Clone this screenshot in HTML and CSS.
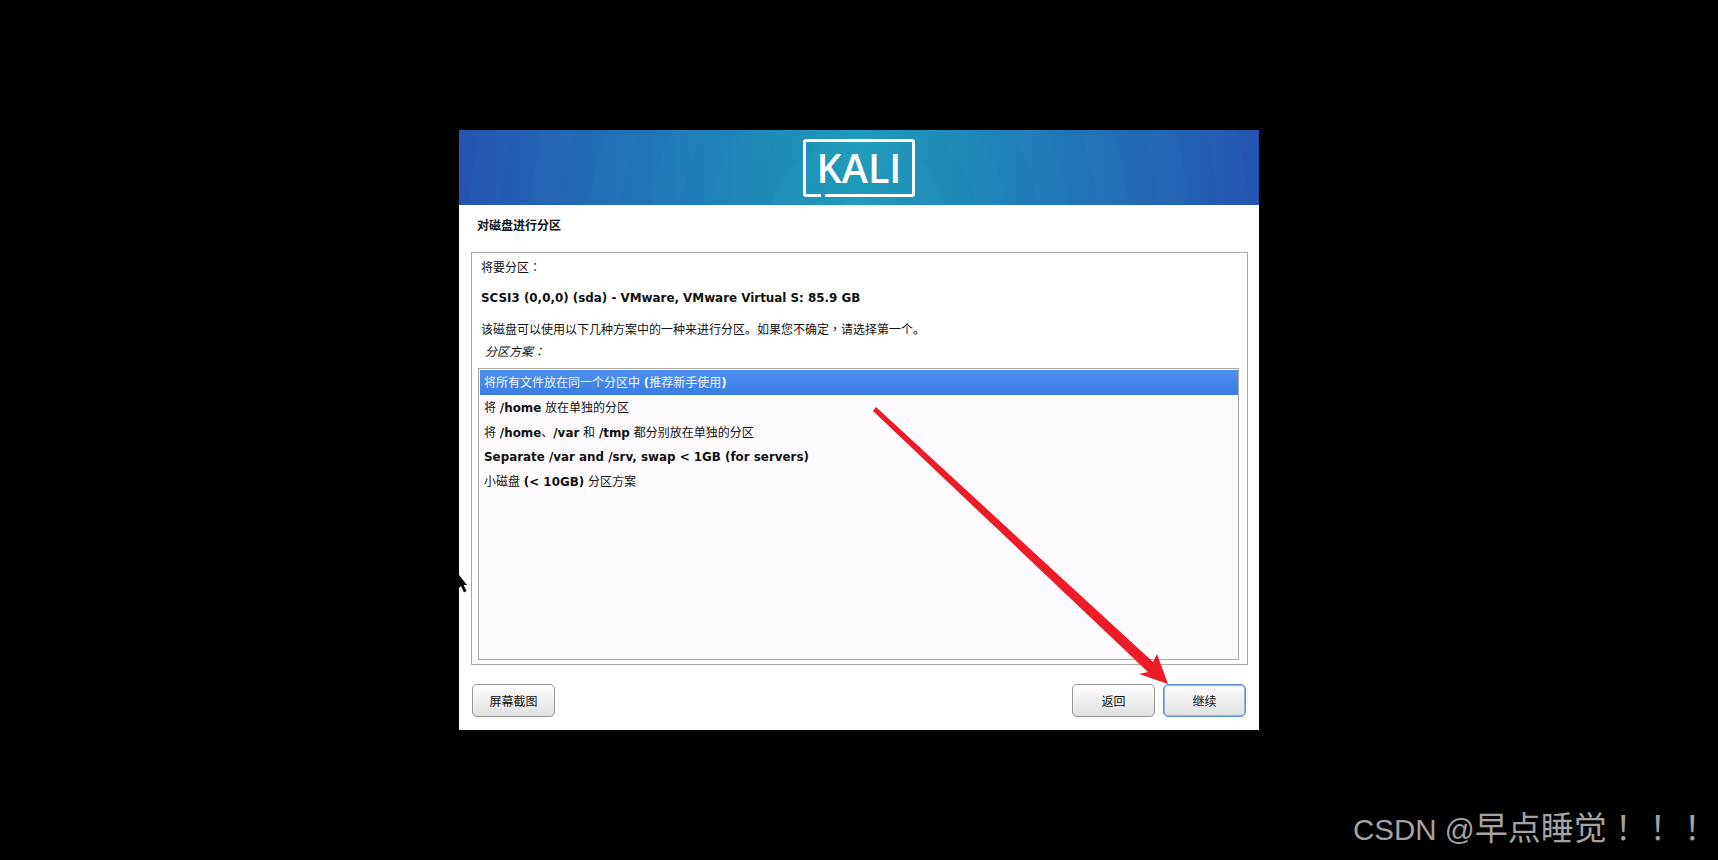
FILE: index.html
```html
<!DOCTYPE html>
<html lang="zh-CN">
<head>
    <meta charset="UTF-8">
    <meta name="viewport" content="width=device-width, initial-scale=1.0">
    <title>对磁盘进行分区</title>
    <link rel="stylesheet" href="styles.css">
</head>
<body>

    <div class="window">
        <div class="banner">
            <div class="logo">KALI</div>
        </div>

        <h1 class="page-title">对磁盘进行分区</h1>

        <div class="panel">
            <p class="line-intro">将要分区<span class="punct" lang="zh-TW">：</span></p>
            <p class="line-disk">SCSI3 (0,0,0) (sda) - VMware, VMware Virtual S: 85.9 GB</p>
            <p class="line-help">该磁盘可以使用以下几种方案中的一种来进行分区。如果您不确定<span class="punct" lang="zh-TW">，</span>请选择第一个。</p>
            <p class="line-label">分区方案<span class="punct" lang="zh-TW">：</span></p>

            <div class="scheme-list">
                <div class="scheme-row selected">将所有文件放在同一个分区中 <b>(</b>推荐新手使用<b>)</b></div>
                <div class="scheme-row">将 <b>/home</b> 放在单独的分区</div>
                <div class="scheme-row">将 <b>/home</b>、<b>/var</b> 和 <b>/tmp</b> 都分别放在单独的分区</div>
                <div class="scheme-row"><b>Separate /var and /srv, swap &lt; 1GB (for servers)</b></div>
                <div class="scheme-row">小磁盘 <b>(&lt; 10GB)</b> 分区方案</div>
            </div>
        </div>

        <div class="footer">
            <button class="btn">屏幕截图</button>
            <div class="footer-right">
                <button class="btn">返回</button>
                <button class="btn primary">继续</button>
            </div>
        </div>
    </div>

    <!-- annotation drawn on top of the screenshot, plus the mouse pointer -->
    <svg class="overlay" width="1718" height="860" viewBox="0 0 1718 860">
        <polygon class="pointer" points="459,575 467,585 463.500,585 466.500,591 464,592.500 461,586 459,588"/>
        <polygon class="arrow" points="876,407 1153,662 1157,654 1168,684 1139,674 1148,672 873,411"/>
    </svg>

    <div class="watermark"><span class="wm-latin">CSDN @</span>早点睡觉<span class="wm-punct" lang="zh-TW">！！！</span></div>

</body>
</html>
```

FILE: styles.css
```css
body {
    margin: 0;
    padding: 0;
    background-color: #000;
    font-family: "DejaVu Sans", "Noto Sans CJK SC", sans-serif;
    font-size: 12px;
    color: #111;
}
p, h1 {
    margin: 0;
    font-size: 12px;
}
.punct {
    font-family: "Noto Sans CJK TC", sans-serif;
}
.window {
    width: 800px;
    height: 600px;
    margin: 130px auto 0;
    background-color: #fff;
    display: flex;
    flex-direction: column;
}
.banner {
    height: 75px;
    display: flex;
    align-items: center;
    justify-content: center;
    background:
        repeating-radial-gradient(circle at 50% 130%, rgba(255, 255, 255, 0.008) 0 30px, rgba(0, 0, 0, 0.008) 30px 60px),
        linear-gradient(90deg, #2355b0 0%, #2079b8 26%, #1f9bbb 50%, #2079b8 74%, #2355b0 100%);
}
.logo {
    position: relative;
    box-sizing: border-box;
    width: 112px;
    height: 58px;
    margin-top: 1px;
    border: 3px solid #fff;
    border-radius: 3px;
    color: #fff;
    font-family: "Open Sans", sans-serif;
    font-weight: 600;
    font-size: 39.500px;
    line-height: 52px;
    text-align: center;
}
.logo::after {
    content: "";
    position: absolute;
    left: 15px;
    bottom: -3px;
    width: 4px;
    height: 3px;
    background-color: #1f93ba;
}
.page-title {
    height: 47px;
    line-height: 42px;
    padding-left: 18px;
    box-sizing: border-box;
    font-weight: bold;
}
.panel {
    box-sizing: border-box;
    height: 413px;
    margin: 0 11px 0 12px;
    padding: 0 8px 0 6px;
    border: 1px solid #aaa;
}
.line-intro {
    height: 28px;
    line-height: 27px;
    padding-left: 3px;
}
.line-disk {
    height: 32px;
    line-height: 34px;
    padding-left: 3px;
    font-weight: bold;
    font-size: 11.900px;
}
.line-help {
    height: 32px;
    line-height: 32px;
    padding-left: 3px;
}
.line-label {
    height: 25px;
    line-height: 12px;
    padding: 0 0 0 7px;
    box-sizing: border-box;
    font-style: italic;
}
.scheme-list {
    box-sizing: border-box;
    height: 292px;
    margin-top: -2px;
    padding: 1px 0 1px 1px;
    border: 1px solid #aaa;
    background-color: #fefbff;
}
.scheme-row {
    box-sizing: border-box;
    height: 24.500px;
    line-height: 23.500px;
    padding: 2px 0 0 4px;
}
.scheme-row b {
    font-size: 11.900px;
}
.scheme-row.selected {
    height: 25px;
    line-height: 24px;
    padding-top: 1px;
    color: #eef4ff;
    background: linear-gradient(#4f92f2, #3a7ce2);
}
.footer {
    flex: 1;
    display: flex;
    justify-content: space-between;
    padding: 19px 13px 0 13px;
}
.footer-right {
    display: flex;
    gap: 8px;
}
.btn {
    width: 83px;
    height: 33px;
    padding: 0;
    border: 1px solid #959595;
    border-radius: 5px;
    background: linear-gradient(#fff 0%, #f3f3f3 35%, #e9e9e9 70%, #e0dfdf 100%);
    font-family: inherit;
    font-size: 12px;
    color: #111;
}
.btn.primary {
    border-color: #5f8fdb;
    box-shadow: inset 0 0 0 1px #8fb2e8;
}
.overlay {
    position: absolute;
    left: 0;
    top: 0;
}
.arrow {
    fill: #ee1c27;
}
.pointer {
    fill: #000;
}
.watermark {
    position: absolute;
    left: 1353px;
    top: 804px;
    white-space: nowrap;
    font-family: "Noto Sans CJK SC", sans-serif;
    font-size: 33px;
    line-height: 44px;
    color: #a3a3a3;
}
.wm-latin {
    font-family: "Liberation Sans", sans-serif;
    font-size: 29.500px;
}
.wm-punct {
    font-family: "Noto Sans CJK TC", sans-serif;
    letter-spacing: 1.500px;
}
```
